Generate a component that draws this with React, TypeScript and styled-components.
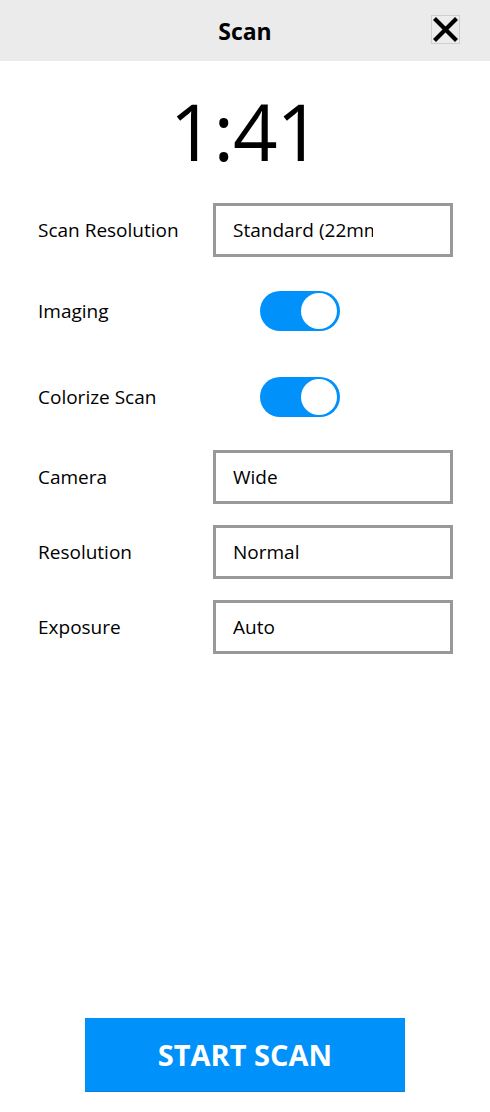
import React from "react";
import styled, { createGlobalStyle } from "styled-components";

const Global = createGlobalStyle`
  html, body { margin: 0; padding: 0; background: #ffffff; }
  body { font-family: "Open Sans", "Noto Sans", sans-serif; color: #000; }
  * { box-sizing: border-box; }
`;

const Page = styled.div`
  display: flex;
  flex-direction: column;
  min-height: 100vh;
  width: 490px;
`;

const Header = styled.header`
  height: 61px;
  background: #ebebeb;
  display: flex;
  align-items: center;
  justify-content: center;
  position: relative;
`;

const Title = styled.h1`
  margin: 0;
  font-size: 23px;
  font-weight: 700;
  letter-spacing: 0;
`;

const CloseButton = styled.button`
  position: absolute;
  left: 431px;
  top: 15px;
  width: 29px;
  height: 29px;
  padding: 0;
  border: 1px solid #cfcfcf;
  background: #ececec;
  display: flex;
  align-items: center;
  justify-content: center;
  cursor: pointer;
`;

const Timer = styled.div`
  margin-top: 20px;
  height: 100px;
  line-height: 100px;
  text-align: center;
  font-size: 78px;
  font-weight: 400;
  letter-spacing: -1px;
`;

const Form = styled.div`
  margin-top: 22px;
  display: grid;
  grid-template-columns: 175px 240px;
  row-gap: 21px;
  padding-left: 38px;
`;

const Label = styled.div<{ $h: number }>`
  height: ${(p) => p.$h}px;
  display: flex;
  align-items: center;
  font-size: 19px;
  white-space: nowrap;
`;

const Field = styled.div`
  height: 54px;
  border: 3px solid #999999;
  display: flex;
  align-items: center;
  padding-left: 17px;
  font-size: 19px;
  overflow: hidden;
  white-space: nowrap;
`;

const FieldText = styled.span`
  display: block;
  max-width: 140px;
  overflow: hidden;
  white-space: nowrap;
`;

const ToggleCell = styled.div`
  height: 65px;
  display: flex;
  align-items: center;
  padding-left: 47px;
`;

const Track = styled.div<{ $on: boolean }>`
  width: 80px;
  height: 40px;
  border-radius: 20px;
  background: ${(p) => (p.$on ? "#0091fa" : "#cccccc")};
  position: relative;
`;

const Knob = styled.div<{ $on: boolean }>`
  position: absolute;
  top: 2px;
  left: ${(p) => (p.$on ? "41px" : "3px")};
  width: 36px;
  height: 36px;
  border-radius: 50%;
  background: #ffffff;
`;

const Spacer = styled.div`
  flex: 1;
`;

const Footer = styled.div`
  display: flex;
  justify-content: center;
  padding-bottom: 20px;
`;

const StartButton = styled.button`
  width: 320px;
  height: 74px;
  background: #0091fb;
  border: none;
  border-bottom: 1px solid #0a7fd8;
  color: #ffffff;
  font-family: "Open Sans", "Noto Sans", sans-serif;
  font-size: 29px;
  font-weight: 700;
  cursor: pointer;
`;

const Toggle = ({ on }: { on: boolean }) => (
  <ToggleCell>
    <Track $on={on}>
      <Knob $on={on} />
    </Track>
  </ToggleCell>
);

export default function App() {
  return (
    <Page>
      <Global />
      <Header>
        <Title>Scan</Title>
        <CloseButton aria-label="Close">
          <svg width="25" height="25" viewBox="0 0 25 25">
            <path d="M1.5 1.5 L23.5 23.5 M23.5 1.5 L1.5 23.5" stroke="#000" strokeWidth="4.2" strokeLinecap="butt" />
          </svg>
        </CloseButton>
      </Header>
      <Timer>1:41</Timer>
      <Form>
        <Label $h={54}>Scan Resolution</Label>
        <Field>
          <FieldText>Standard (22mm)</FieldText>
        </Field>
        <Label $h={65}>Imaging</Label>
        <Toggle on />
        <Label $h={65}>Colorize Scan</Label>
        <Toggle on />
        <Label $h={54}>Camera</Label>
        <Field>Wide</Field>
        <Label $h={54}>Resolution</Label>
        <Field>Normal</Field>
        <Label $h={54}>Exposure</Label>
        <Field>Auto</Field>
      </Form>
      <Spacer />
      <Footer>
        <StartButton>START SCAN</StartButton>
      </Footer>
    </Page>
  );
}
